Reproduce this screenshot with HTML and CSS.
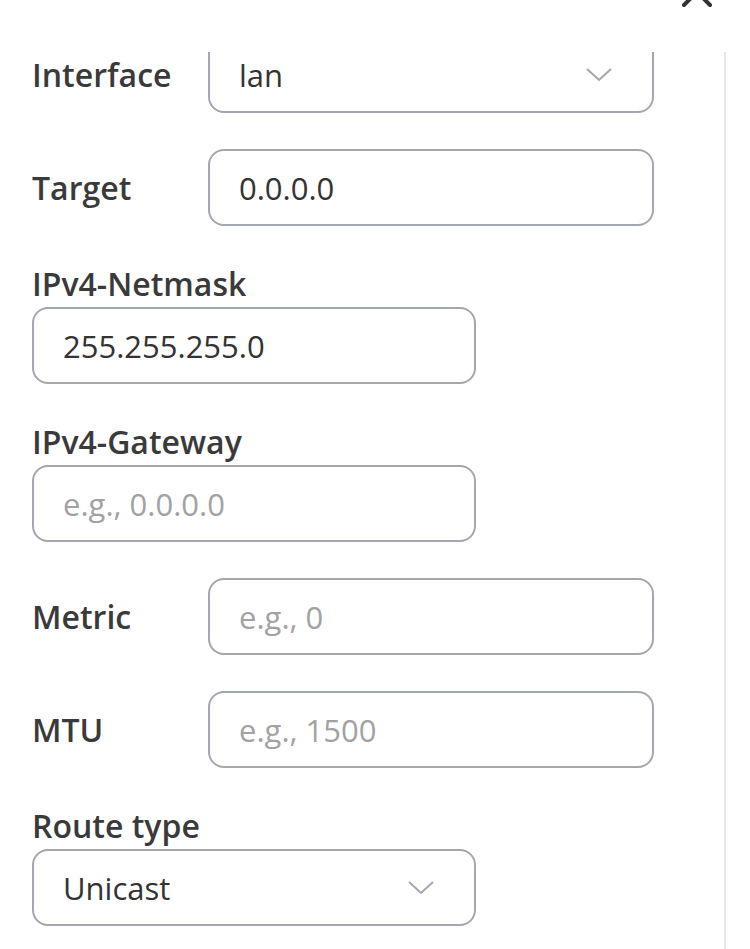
FILE: index.html
```html
<!DOCTYPE html>
<html lang="en">
<head>
  <meta charset="UTF-8" />
  <meta name="viewport" content="width=device-width, initial-scale=1.0" />
  <title>Static route</title>
  <link rel="stylesheet" href="styles.css">
</head>
<body>

  <div class="dialog">
    <div class="dialog-header">
      <button class="close-btn" aria-label="Close">
        <svg width="34" height="34" viewBox="0 0 34 34">
          <path d="M4 4 L30 30 M30 4 L4 30" stroke="#333" stroke-width="4" stroke-linecap="round" fill="none"/>
        </svg>
      </button>
    </div>

    <div class="dialog-body">
      <form class="route-form">

        <div class="field inline">
          <label for="iface">Interface</label>
          <div class="select-wrap">
            <select id="iface" class="control">
              <option>lan</option>
              <option>wan</option>
            </select>
            <svg class="chevron" width="28" height="15" viewBox="0 0 28 15">
              <path d="M2 2 L14 13 L26 2" stroke="#a3a6ad" stroke-width="2" fill="none"/>
            </svg>
          </div>
        </div>

        <div class="field inline">
          <label for="target">Target</label>
          <input id="target" class="control" type="text" value="0.0.0.0">
        </div>

        <div class="field stacked">
          <label for="netmask">IPv4-Netmask</label>
          <input id="netmask" class="control" type="text" value="255.255.255.0">
        </div>

        <div class="field stacked">
          <label for="gateway">IPv4-Gateway</label>
          <input id="gateway" class="control" type="text" placeholder="e.g., 0.0.0.0">
        </div>

        <div class="field inline">
          <label for="metric">Metric</label>
          <input id="metric" class="control" type="text" placeholder="e.g., 0">
        </div>

        <div class="field inline">
          <label for="mtu">MTU</label>
          <input id="mtu" class="control" type="text" placeholder="e.g., 1500">
        </div>

        <div class="field stacked">
          <label for="rtype">Route type</label>
          <div class="select-wrap">
            <select id="rtype" class="control">
              <option>Unicast</option>
              <option>Local</option>
              <option>Broadcast</option>
            </select>
            <svg class="chevron" width="28" height="15" viewBox="0 0 28 15">
              <path d="M2 2 L14 13 L26 2" stroke="#a3a6ad" stroke-width="2" fill="none"/>
            </svg>
          </div>
        </div>

      </form>
    </div>
  </div>

</body>
</html>
```

FILE: styles.css
```css
body {
  margin: 0;
  padding: 0;
  background-color: #fff;
  font-family: 'Open Sans', sans-serif;
  color: #333;
}

.dialog {
  width: 750px;
  height: 949px;
  overflow: hidden;
}

.dialog-header {
  height: 52px;
  display: flex;
  justify-content: flex-end;
  padding-right: 36px;
}

.close-btn {
  background: none;
  border: none;
  padding: 0;
  margin-top: -25px;
  height: 34px;
  cursor: pointer;
}

.dialog-body {
  width: 724px;
  height: 897px;
  border-right: 2px solid #e6e7ea;
  overflow: hidden;
}

.route-form {
  display: flex;
  flex-direction: column;
  gap: 36px;
  margin-top: -16px;
  padding-left: 32px;
}

.field label {
  font-size: 32px;
  font-weight: 600;
  line-height: 44px;
  color: #3a3a3a;
}

.field.inline {
  display: flex;
  align-items: center;
}

.field.inline label {
  width: 176px;
  flex-shrink: 0;
}

.field.inline .control,
.field.inline .select-wrap {
  width: 446px;
}

.field.stacked {
  display: flex;
  flex-direction: column;
  gap: 1px;
}

.field.stacked .control,
.field.stacked .select-wrap {
  width: 444px;
}

.control {
  box-sizing: border-box;
  height: 77px;
  border: 2px solid #a5a7ae;
  border-radius: 16px;
  padding: 0 29px;
  background-color: #fff;
  font-family: 'Open Sans', sans-serif;
  font-size: 31px;
  color: #333;
  outline: none;
  appearance: none;
  -webkit-appearance: none;
}

.control::placeholder {
  color: #a2a2a2;
}

.select-wrap {
  position: relative;
}

.select-wrap .control {
  width: 100%;
}

.chevron {
  position: absolute;
  right: 41px;
  top: 31px;
  pointer-events: none;
}
```
